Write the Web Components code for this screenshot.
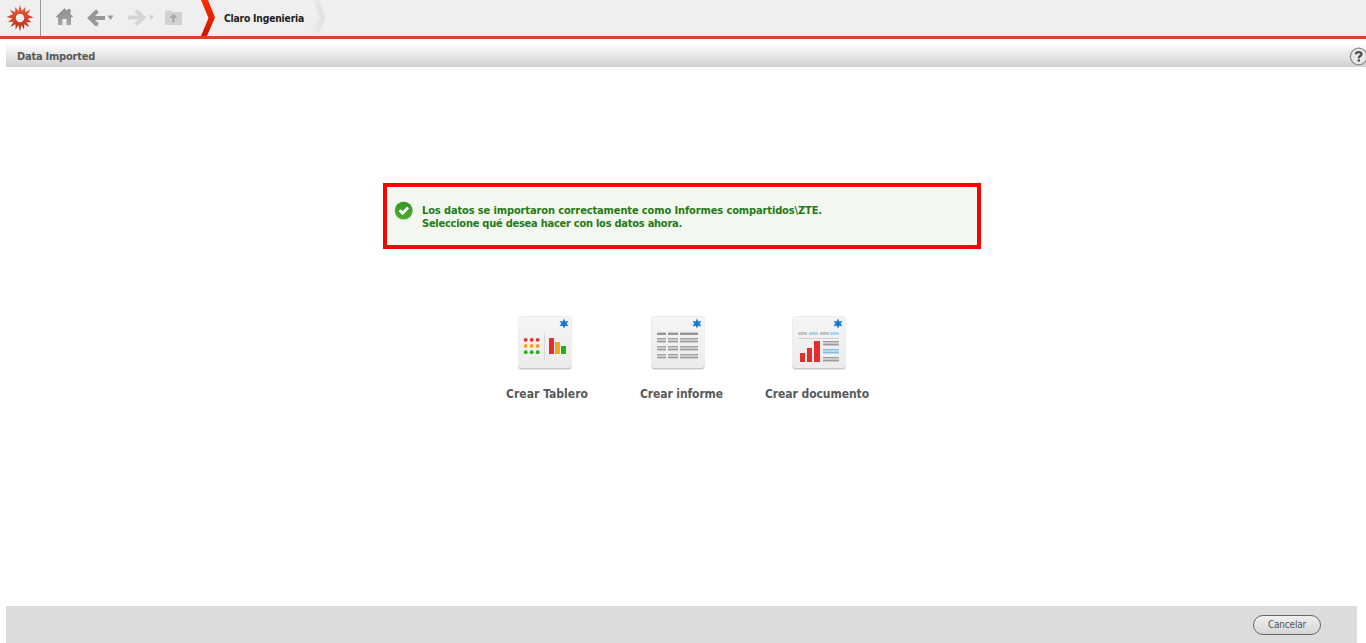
<!DOCTYPE html>
<html lang="es"><head><meta charset="utf-8"><title>Data Imported</title>
<style>html,body{margin:0;height:100%;overflow:hidden;background:#fff}body{font-family:"DejaVu Sans Condensed","DejaVu Sans",sans-serif;font-stretch:condensed}</style></head>
<body><import-page></import-page>
<script>
const define=(name,html)=>customElements.define(name,class extends HTMLElement{
  constructor(){super();const t=document.createElement('template');t.innerHTML=html;this.attachShadow({mode:'open'}).append(t.content.cloneNode(true));}
});

// Text whose tracking is adjusted to fill a given measure
customElements.define('fit-text',class extends HTMLElement{
  connectedCallback(){
    if(this.shadowRoot)return;
    this.attachShadow({mode:'open'}).innerHTML='<style>:host{display:block;white-space:pre}span{display:inline-block}</style><span></span>';
    const s=this.shadowRoot.querySelector('span');s.textContent=this.getAttribute('text');
    const w=+this.getAttribute('measure');
    s.style.letterSpacing=((w-s.getBoundingClientRect().width)/s.textContent.length)+'px';
    this.style.width=w+'px';
  }
});

define('nav-bar',`<style>
:host{display:flex;height:36px;background:#efefef;border-bottom:3px solid #dc4425;box-sizing:content-box}
.logo{width:40px;height:36px;border-right:1px solid #989898}
svg{display:block;flex:none}
fit-text{font-weight:bold;font-size:10.3px;line-height:14px;color:#222;padding-top:11px;margin-left:8px}
.end{margin-left:5px}</style>
<div class="logo"><svg width="40" height="36"><defs><linearGradient id="s" x2="0" y2="1"><stop stop-color="#ee5b36"/><stop offset="1" stop-color="#b7321d"/></linearGradient></defs>
<path fill="url(#s)" fill-rule="evenodd" d="M20 4.500L21.700 11L25.300 7L25 12.300L30.500 9.500L27.400 14.600L33.500 17.500L27.700 18.700L31.500 22.300L26.500 21.900L29.300 27L24.300 24.200L24 29.500L21.400 25.300L20 31.500L18.400 25.300L15.600 29.500L15.400 24.200L10.400 27L13.400 21.700L8 22L12.500 18.400L6.500 17L13 14.300L9.600 9.500L15.200 12.300L15.200 7L18.500 11ZM24.200 18a4.200 4.200 0 1 0-8.400 0a4.200 4.200 0 1 0 8.400 0"/></svg></div>
<svg width="175" height="36"><defs><linearGradient id="g" x2="0" y2="1"><stop stop-color="#8d8d8d"/><stop offset="1" stop-color="#a5a5a5"/></linearGradient><linearGradient id="r" x2="0" y2="1"><stop stop-color="#ff2a00"/><stop offset="1" stop-color="#c91900"/></linearGradient></defs>
<g transform="translate(-41)"><path fill="url(#g)" d="M56 16.500L64.500 8.300L67.500 11V9H70.500V14L73 16.500L72 17.700L71 17V25H66.500V19H62.500V25H58V17L57 17.700Z"/>
<path d="M105 18H90.500M97.500 10.800L90 18L97.500 25.200" fill="none" stroke="#979797" stroke-width="4"/><path fill="#999" d="M107.500 15.500h6l-3 4.500z"/>
<path d="M128 17.500H143M136 10.500L143.500 17.500L136 24.500" fill="none" stroke="#d5d5d5" stroke-width="4"/><path fill="#d0d0d0" d="M148.500 15.500h5.500l-2.700 4.500z"/>
<path fill="#d2d2d2" d="M165 10.500h6l1 1.500h10v13h-17z"/><path fill="#a9a9a9" d="M173.500 13.500l4 4.500h-2.800v4.500h-2.500V18h-2.800z"/>
<path fill="url(#r)" d="M201 0H208L215 17.500L207 36H201L208.500 18Z"/></g></svg>
<fit-text text="Claro Ingenieria" measure="80"></fit-text>
<svg class="end" width="18" height="36"><defs><linearGradient id="e"><stop stop-color="#efefef"/><stop offset="1" stop-color="#dedede"/></linearGradient></defs><path fill="url(#e)" d="M4 0H9L15.500 18L8.500 34H1L10 18Z"/><path d="M9.500 0L16 17.500L9 34" fill="none" stroke="#e3e3e3"/></svg>`);

define('title-bar',`<style>:host{display:flex;justify-content:space-between;margin:5px 0 0 6px;height:23px;background:linear-gradient(#fcfcfc,#d1d1d1);overflow:hidden}
fit-text{font-weight:bold;font-size:11px;line-height:14px;color:#595959;padding:6px 0 0 11px}
svg{display:block;width:17px;height:23px}</style>
<fit-text text="Data Imported" measure="78"></fit-text>
<svg><circle cx="9.700" cy="12.500" r="8.300" fill="#e9e9e9" stroke="#8b8b8b" stroke-width="1.200"/><path d="M7 10.300Q7.100 8.200 9.700 8.200T12.500 10.200Q12.500 11.500 10.900 12.300Q9.800 13 9.800 14.300" fill="none" stroke="#505050" stroke-width="2.300"/><path fill="#505050" d="M8.600 15.300h2.400v2.300h-2.400z"/></svg>`);

define('import-message',`<style>:host{display:flex;box-sizing:border-box;width:598px;height:66px;margin:116px 0 0 383px;border:4px solid #fe0000;background:#f2f7f0;padding:13px 0 0 7px}
svg{width:20px;height:22px;flex:none}
div{margin:4px 0 0 8px;font-weight:bold;font-size:11px;line-height:13px;color:#257a16}</style>
<svg><defs><linearGradient id="c" x2="0" y2="1"><stop stop-color="#349826"/><stop offset="1" stop-color="#49ab2b"/></linearGradient></defs><circle cx="9.700" cy="11" r="9.400" fill="#d0dfcb"/><circle cx="9.700" cy="10.500" r="8.800" fill="url(#c)"/><path d="M5.600 10.300L8.700 13.300L14 7.500" fill="none" stroke="#fff" stroke-width="2.800"/></svg>
<div><fit-text text="Los datos se importaron correctamente como Informes compartidos\\ZTE." measure="400"></fit-text><fit-text text="Seleccione qué desea hacer con los datos ahora." measure="260"></fit-text></div>`);

define('create-option',`<style>:host{display:flex;flex-direction:column;align-items:flex-start;font-weight:bold;font-size:12px;line-height:16px;color:#595959}
.tile{position:relative;width:54px;height:54px;margin:0 0 16px var(--inset)}svg,::slotted(svg){position:absolute;inset:0;width:54px;height:54px}</style>
<div class="tile"><svg><defs><linearGradient id="t" x2="0" y2="1"><stop stop-color="#f5f5f5"/><stop offset="1" stop-color="#ececec"/></linearGradient></defs><rect x=".5" y="1" width="53" height="52.500" rx="3" fill="#c8c8c8"/><rect x=".5" y=".5" width="53" height="51" rx="3" fill="url(#t)" stroke="#ececec"/><path fill="#1976d2" d="M46 2.500l1.300 2.900 3.200-.4-1.900 2.500 1.900 2.700-3.200-.5-1.300 2.800-1.300-2.800-3.200.5 1.900-2.700-1.900-2.500 3.200.4z"/></svg><slot name="icon"></slot></div><slot></slot>`);

const bars=(list)=>list.map(([x,y,w,h,c])=>`<path fill="${c}" d="M${x} ${y}h${w}v${h}h${-w}z"/>`).join('');
let dots='';['#e52d2f','#f5a41c','#26af19'].forEach((c,r)=>[8,14,20].forEach(x=>dots+=`<circle cx="${x-.3}" cy="${23.8+r*6.2}" r="1.9" fill="${c}"/>`));
const board=dots+bars([[26,17,1,27,'#dadada'],[31,22,5,16,'#e52d2f'],[37,26,5,12,'#f5a41c'],[43,30,5,8,'#26af19']]);
const cols=[[6,9],[17,10],[29,18]];let report='';
cols.forEach(([x,w])=>{report+=bars([[x,16,w,1,'#c9c9c9'],[x,17,w,2,'#999']]);[22,30,38].forEach(y=>report+=bars([[x,y,w,1,'#a5a5a5'],[x,y+1,w,2,'#c9c9c9'],[x,y+3,w,1,'#a0a0a0'],[x,y+4,w,1,'#ccc']]));});
let docu=bars([[6,16,9,3,'#c5c5c5'],[17,16,9,3,'#abd4ef'],[28,16,9,3,'#c5c5c5'],[38,16,9,3,'#abd4ef'],[6,22,41,1,'#cfcfcf'],[8,37,5,9,'#e52d2f'],[15,32,5,14,'#e52d2f'],[22,25,6,21,'#e52d2f']]);
[[25,'#9c9c9c','#c9c9c9'],[33,'#80bce4','#b8daef'],[41,'#9c9c9c','#c9c9c9']].forEach(([y,a,b])=>docu+=bars([[31,y,16,1,a],[31,y+1,16,2,b],[31,y+3,16,1,a],[31,y+4,16,1,b]]));
const option=(icon,text,w,inset)=>`<create-option style="--inset:${inset}px"><svg slot="icon">${icon}</svg><fit-text text="${text}" measure="${w}"></fit-text></create-option>`;
define('create-options',`<style>:host{display:flex;gap:52px;margin:67px 0 0 506px}create-option:last-of-type{margin-left:-10px}</style>
${option(board,'Crear Tablero',82,12)}${option(report,'Crear informe',83,11)}${option(docu,'Crear documento',104,27)}`);

define('action-footer',`<style>:host{display:flex;justify-content:flex-end;align-items:flex-start;box-sizing:border-box;height:37px;margin:auto 9px 0 6px;padding:9px 36px 0 0;background:#dcdcdc}
button{box-sizing:border-box;width:68px;height:20px;border:1px solid #666;border-radius:10px;background:linear-gradient(#f0f0f0,#d6d6d6);padding:0 0 1px;display:flex;justify-content:center;align-items:center;font:10px "DejaVu Sans Condensed","DejaVu Sans",sans-serif;font-stretch:condensed;color:#555}</style>
<button><fit-text text="Cancelar" measure="38"></fit-text></button>`);
define('import-page',`<style>:host{display:flex;flex-direction:column;height:643px}nav-bar,title-bar,import-message,create-options,action-footer{flex:none}</style><nav-bar></nav-bar><title-bar></title-bar><import-message></import-message><create-options></create-options><action-footer></action-footer>`);
</script></body></html>
